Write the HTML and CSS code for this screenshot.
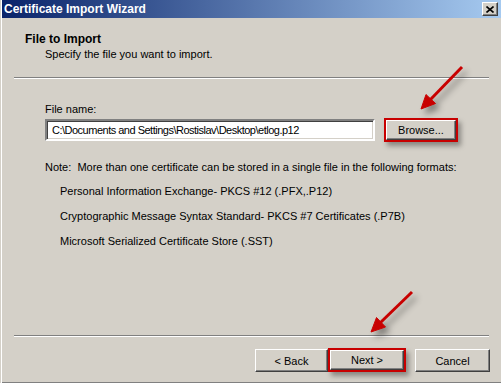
FILE: index.html
```html
<!DOCTYPE html>
<html lang="en">
  <head>
    <meta charset="UTF-8" />
    <meta name="viewport" content="width=device-width, initial-scale=1.0" />
    <title>Certificate Import Wizard</title>
    <link rel="stylesheet" href="styles.css">
  </head>
  <body>
    <div class="window">
      <!-- Title Bar -->
      <div class="titlebar">
        <span class="title">Certificate Import Wizard</span>
        <span class="close-btn">
          <svg width="8" height="7" viewBox="0 0 8 7">
            <path d="M0.5 0.5 L7.5 6.5 M7.5 0.5 L0.5 6.5" stroke="#000" stroke-width="1.6" fill="none" />
          </svg>
        </span>
      </div>

      <!-- Header -->
      <div class="header">
        <div class="header-title">File to Import</div>
        <div class="header-sub">Specify the file you want to import.</div>
      </div>
      <div class="separator"></div>

      <!-- Content -->
      <div class="content">
        <div class="label">File name:</div>
        <div class="file-row">
          <div class="input">C:\Documents and Settings\Rostislav\Desktop\etlog.p12</div>
          <span class="mark mark-browse"><span class="btn">Browse...</span></span>
        </div>
        <div class="note">Note:&nbsp; More than one certificate can be stored in a single file in the following formats:</div>
        <ul class="formats">
          <li>Personal Information Exchange- PKCS #12 (.PFX,.P12)</li>
          <li>Cryptographic Message Syntax Standard- PKCS #7 Certificates (.P7B)</li>
          <li>Microsoft Serialized Certificate Store (.SST)</li>
        </ul>
      </div>
      <div class="separator"></div>

      <!-- Buttons -->
      <div class="footer">
        <span class="btn btn-back">&lt; Back</span>
        <span class="mark mark-next"><span class="btn">Next &gt;</span></span>
        <span class="btn btn-cancel">Cancel</span>
      </div>

      <!-- Annotation arrows -->
      <svg class="arrows" width="501" height="383" viewBox="0 0 501 383">
        <g fill="#c80000" stroke="#c80000">
          <line x1="462" y1="67" x2="430" y2="100" stroke-width="3" />
          <polygon points="421,109 435.5,103.5 426,94.5" stroke-width="1" />
          <line x1="412" y1="292" x2="380" y2="323" stroke-width="3" />
          <polygon points="371,332 385.5,327 376.5,317.5" stroke-width="1" />
        </g>
      </svg>
    </div>
  </body>
</html>
```

FILE: styles.css
```css
/* Basic Styles */
body {
  margin: 0;
  padding: 0;
  font-family: "Liberation Sans", Arial, sans-serif;
  font-size: 11px;
  color: #000;
  background-color: #d4d0c8;
}

.window {
  position: relative;
  width: 501px;
  height: 383px;
  display: flex;
  flex-direction: column;
  background-color: #d4d0c8;
  box-shadow: inset 1px 0 #d4d0c8, inset 2px 0 #fff, inset 0 -1px #808080;
  overflow: hidden;
}

/* Title Bar */
.titlebar {
  height: 18px;
  margin-left: 2px;
  display: flex;
  align-items: center;
  justify-content: space-between;
  background: linear-gradient(to right, #0a246a, #a6caf0);
}

.title {
  padding-left: 2px;
  color: #fff;
  font-weight: bold;
  font-size: 12px;
  line-height: 18px;
}

.close-btn {
  width: 14px;
  height: 12px;
  margin-right: 3px;
  display: flex;
  align-items: center;
  justify-content: center;
  background-color: #d4d0c8;
  border: 1px solid;
  border-color: #fff #404040 #404040 #fff;
  box-shadow: inset -1px -1px #808080;
}

/* Header */
.header {
  height: 59px;
  box-sizing: border-box;
  padding: 15px 0 0 25px;
}

.header-title {
  font-weight: bold;
  font-size: 12px;
  line-height: 13px;
}

.header-sub {
  margin-top: 2px;
  padding-left: 20px;
  line-height: 13px;
}

.separator {
  height: 0;
  margin: 0 12px 0 14px;
  border-top: 1px solid #808080;
  border-bottom: 1px solid #fff;
}

/* Content */
.content {
  flex: 1;
  padding: 24px 0 0 45px;
  line-height: 13px;
}

.file-row {
  margin-top: 2px;
  display: flex;
  align-items: center;
  gap: 9px;
}

.input {
  width: 321px;
  height: 18px;
  padding-left: 5px;
  line-height: 18px;
  letter-spacing: -0.5px;
  background-color: #fff;
  border: 2px solid;
  border-color: #808080 #fff #fff #808080;
  box-shadow: inset 1px 1px #404040, inset -1px -1px #d4d0c8;
  white-space: nowrap;
  overflow: hidden;
}

.note {
  margin-top: 19px;
}

.formats {
  list-style: none;
  margin: 11px 0 0;
  padding: 0 0 0 15px;
}

.formats li {
  margin-bottom: 12px;
}

/* Buttons */
.btn {
  display: flex;
  align-items: center;
  justify-content: center;
  box-sizing: border-box;
  height: 23px;
  background-color: #d4d0c8;
  border: 1px solid;
  border-color: #fff #404040 #404040 #fff;
  box-shadow: inset -1px -1px #808080;
}

.mark {
  display: flex;
  border: 2px solid #c80000;
  box-shadow: 3px 4px 5px rgba(0, 0, 0, 0.35);
}

.mark .btn {
  height: 20px;
}

.mark-browse .btn {
  width: 70px;
}

.footer {
  height: 46px;
  box-sizing: border-box;
  padding: 12px 11px 0 0;
  display: flex;
  align-items: flex-start;
  justify-content: flex-end;
}

.btn-back {
  width: 73px;
}

.mark-next {
  margin-top: -1px;
}

.mark-next .btn {
  width: 74px;
}

.btn-cancel {
  width: 75px;
  margin-left: 9px;
}

/* Arrows */
.arrows {
  position: absolute;
  top: 0;
  left: 0;
  pointer-events: none;
  filter: drop-shadow(4px 5px 3px rgba(0, 0, 0, 0.4));
}
```
